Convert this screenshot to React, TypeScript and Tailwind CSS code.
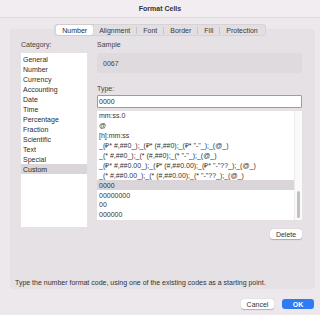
import React from 'react';

const categories = [
  'General',
  'Number',
  'Currency',
  'Accounting',
  'Date',
  'Time',
  'Percentage',
  'Fraction',
  'Scientific',
  'Text',
  'Special',
  'Custom',
];

const formats = [
  'mm:ss.0',
  '@',
  '[h]:mm:ss',
  '_(₽* #,##0_);_(₽* (#,##0);_(₽* "-"_);_(@_)',
  '_(* #,##0_);_(* (#,##0);_(* "-"_);_(@_)',
  '_(₽* #,##0.00_);_(₽* (#,##0.00);_(₽* "-"??_);_(@_)',
  '_(* #,##0.00_);_(* (#,##0.00);_(* "-"??_);_(@_)',
  '0000',
  '00000000',
  '00',
  '000000',
];

const tabs = ['Number', 'Alignment', 'Font', 'Border', 'Fill', 'Protection'];

const TabBar: React.FC = () => (
  <div className="relative z-10 mt-[6px] flex h-[12px] justify-center">
    <div className="flex h-[12px] items-center rounded-[3px] border border-[#d6d2d6] bg-[#e2dee2] px-[1px]">
      {tabs.map((t, i) => (
        <React.Fragment key={t}>
          {i > 1 && <div className="h-[7px] w-px bg-[#c9c5c9]" />}
          <div
            className={
              i === 0
                ? 'flex h-[10px] items-center rounded-[2px] bg-white px-[6px] text-[#2a2a2a] shadow-[0_0_1px_rgba(0,0,0,0.3)]'
                : 'flex h-[10px] items-center px-[6px] text-[#3a3a3a]'
            }
          >
            {t}
          </div>
        </React.Fragment>
      ))}
    </div>
  </div>
);

export default function App() {
  return (
    <div className="h-[315px] w-[320px] overflow-hidden bg-[#ece8ec] text-[7px] leading-none text-[#2c2c2c] font-['Liberation_Sans',Arial,sans-serif]">
      {/* Title bar */}
      <div className="flex h-[18px] items-center justify-center border-b border-[#dcd8dc] bg-[#f1edf1] font-semibold text-[#333]">
        Format Cells
      </div>

      <TabBar />

      {/* Main panel */}
      <div className="mx-[10px] -mt-[7px] flex h-[260px] w-[305px] flex-col rounded-[4px] bg-[#e5e1e5] pl-[11px] pr-[13px] pt-[12px]">
        <div className="flex gap-[10px]">
          {/* Category column */}
          <div className="flex w-[66px] flex-col">
            <div className="h-[6px] text-[#444]">Category:</div>
            <div className="mt-[6px] h-[174px] bg-white pt-[1px]">
              {categories.map((c) => (
                <div
                  key={c}
                  className={
                    c === 'Custom'
                      ? 'flex h-[10px] items-center bg-[#d9d5d9] pl-[2px]'
                      : 'flex h-[10px] items-center pl-[2px]'
                  }
                >
                  {c}
                </div>
              ))}
            </div>
          </div>

          {/* Right column */}
          <div className="flex w-[205px] flex-col">
            <div className="h-[6px] text-[#444]">Sample</div>
            <div className="mt-[6px] flex h-[20px] items-center rounded-[3px] bg-[#dedade] pl-[6px] text-[#444]">
              0067
            </div>
            <div className="mt-[12px] h-[6px] text-[#444]">Type:</div>
            <div className="mt-[4px] flex h-[13px] items-center rounded-[1px] border-[1.5px] border-[#6ea2f5] bg-white pl-[1px]">
              0000
            </div>
            <div className="mt-[3px] flex h-[109px] bg-white">
              <div className="flex-1">
                {formats.map((f, i) => (
                  <div
                    key={i}
                    className={
                      i === 7
                        ? 'flex h-[9.9px] items-center whitespace-nowrap bg-[#d9d5d9] pl-[2px] text-[#333]'
                        : 'flex h-[9.9px] items-center whitespace-nowrap pl-[2px] text-[#333]'
                    }
                  >
                    {f}
                  </div>
                ))}
              </div>
              <div className="flex w-[8px] flex-col justify-end border-l border-[#ece9ec] bg-[#fafafa] px-[2px] pb-[2px]">
                <div className="h-[27px] rounded-full bg-[#c2bfc2]" />
              </div>
            </div>
            <div className="mt-[9px] flex justify-end">
              <div className="flex h-[10px] w-[32px] items-center justify-center rounded-[3px] bg-white text-[#333] shadow-[0_0.5px_1px_rgba(0,0,0,0.25)]">
                Delete
              </div>
            </div>
          </div>
        </div>
        <div className="mt-auto mb-[3px] -ml-[6px] text-[#333]">
          Type the number format code, using one of the existing codes as a starting point.
        </div>
      </div>

      {/* Footer buttons */}
      <div className="mt-[10px] flex justify-end gap-[8px] pr-[6px]">
        <div className="flex h-[10px] w-[33px] items-center justify-center rounded-[3px] bg-white text-[#333] shadow-[0_0.5px_1px_rgba(0,0,0,0.25)]">
          Cancel
        </div>
        <div className="flex h-[10px] w-[32px] items-center justify-center rounded-[3px] bg-[#2f7bf5] font-semibold text-white">
          OK
        </div>
      </div>
    </div>
  );
}
